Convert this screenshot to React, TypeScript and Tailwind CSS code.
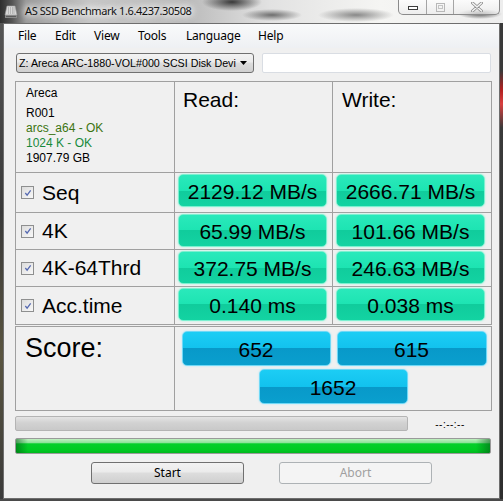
import React from "react"

const rows = [
  { label: "Seq", read: "2129.12 MB/s", write: "2666.71 MB/s" },
  { label: "4K", read: "65.99 MB/s", write: "101.66 MB/s" },
  { label: "4K-64Thrd", read: "372.75 MB/s", write: "246.63 MB/s" },
  { label: "Acc.time", read: "0.140 ms", write: "0.038 ms" },
]

const menu = [
  { label: "File", w: "w-[37px]" },
  { label: "Edit", w: "w-[39px]" },
  { label: "View", w: "w-[44px]" },
  { label: "Tools", w: "w-[48px]" },
  { label: "Language", w: "w-[72px]" },
  { label: "Help", w: "w-[40px]" },
]

function CheckBox() {
  return (
    <span className="flex size-[13px] items-center justify-center border border-[#8e8f8f] bg-[linear-gradient(135deg,#dcdcdc,#f8f8f8)]">
      <svg viewBox="0 0 9 9" className="size-[8px]">
        <path d="M1.5 4.5 L3.5 7 L7.5 1.5" fill="none" stroke="#5468b0" strokeWidth="1.4" />
      </svg>
    </span>
  )
}

function GreenBox({ value }: { value: string }) {
  return (
    <div className="flex h-[33px] w-[149px] items-center justify-center rounded-[5px] border border-[#7cf0d0] bg-[linear-gradient(180deg,#2ae9bb_0%,#1de4b2_50%,#10cc9c_50%,#13d3a2_100%)] pt-[2px] shadow-[0_0_2px_#9ef5dc] font-['Liberation_Sans',Arial,sans-serif] text-[21px] text-black">
      {value}
    </div>
  )
}

function BlueBox({ value, w }: { value: string; w: string }) {
  return (
    <div className={`flex h-[35px] ${w} items-center justify-center rounded-[5px] border border-[#6fd8f6] bg-[linear-gradient(180deg,#1ccdf4_0%,#12c2ee_50%,#0899c9_50%,#0a9fce_100%)] pt-[2px] shadow-[0_0_2px_#a5e6fa] font-['Liberation_Sans',Arial,sans-serif] text-[21px] text-black`}>
      {value}
    </div>
  )
}

export default function App() {
  return (
    <div className="flex h-[501px] w-[503px] flex-col overflow-hidden bg-[#3a3a3a] font-['Noto_Sans',sans-serif]">
      {/* Title bar */}
      <div className="flex h-[23px] shrink-0 items-start justify-between bg-[radial-gradient(ellipse_30px_6px_at_272px_15px,rgba(70,70,70,0.75),transparent),radial-gradient(ellipse_38px_7px_at_356px_15px,rgba(80,80,80,0.65),transparent),radial-gradient(ellipse_22px_5px_at_480px_14px,rgba(60,60,60,0.8),transparent),radial-gradient(ellipse_30px_9px_at_232px_2px,rgba(40,40,40,0.9),transparent),linear-gradient(90deg,#2e2e2e,#555_12px,#9a9a9a_26px,#c6c6c6_90px,#bcbcbc_190px,#e2e2e2_270px,#f5f5f3_380px,#ededed)]">
        <div className="flex h-[23px] items-center gap-[7px] pl-[4px]">
          <svg viewBox="0 0 14 14" className="size-[14px]">
            <path d="M3 1 H11 L13 10 H1 Z" fill="#d8d8d8" stroke="#9a9a9a" strokeWidth="0.6" />
            <path d="M4.5 2 V9 M6.5 2 V9 M8.5 2 V9 M10 2 V9" stroke="#a8a8a8" strokeWidth="0.7" />
            <rect x="1" y="10" width="12" height="3" fill="#8a8a8a" />
            <rect x="2" y="11" width="10" height="1" fill="#5c5c5c" />
          </svg>
          <span className="text-[11px] tracking-[-0.4px] text-[#111] [text-shadow:0_0_6px_#fff,0_0_8px_#fff,0_0_10px_#fff]">
            AS SSD Benchmark 1.6.4237.30508
          </span>
        </div>
        <div className="mr-[3px] flex h-[15px] w-[102px] overflow-hidden rounded-b-[5px] border border-t-0 border-[#8a8a8a] bg-[linear-gradient(180deg,rgba(255,255,255,0.75),rgba(235,235,235,0.7))]">
          <div className="flex w-[28px] items-center justify-center border-r border-[#a5a5a5]">
            <span className="mt-[2px] h-[4px] w-[10px] border border-[#3c3c3c] bg-white" />
          </div>
          <div className="flex w-[27px] items-center justify-center border-r border-[#a5a5a5]">
            <span className="flex size-[9px] items-center justify-center border border-[#b8b8b8]">
              <span className="h-[4px] w-[5px] border border-[#c4c4c4]" />
            </span>
          </div>
          <div className="flex flex-1 items-center justify-center">
            <svg viewBox="0 0 12 10" className="h-[10px] w-[12px]">
              <path d="M1.5 1 L10.5 9 M10.5 1 L1.5 9" stroke="#8a8a8a" strokeWidth="3" strokeLinecap="round" />
              <path d="M1.5 1 L10.5 9 M10.5 1 L1.5 9" stroke="#f4f4f4" strokeWidth="1.6" strokeLinecap="round" />
            </svg>
          </div>
        </div>
      </div>

      {/* Frame + client area */}
      <div className="flex h-[476px] shrink-0">
        <div className="w-[3px] bg-[linear-gradient(180deg,#555,#3a3a3a_40%,#5a5540_70%,#3a3a3a)]" />
        <div className="flex w-[497px] flex-col border border-[#6e6e6e] bg-[#f0f0f0]">
          {/* Menu */}
          <div className="flex h-[24px] items-center bg-[linear-gradient(180deg,#f9fafb,#eef0f3)] pl-[14px] text-[12px] tracking-[-0.2px] text-black">
            {menu.map((m) => (
              <span key={m.label} className={m.w}>
                {m.label}
              </span>
            ))}
          </div>

          {/* Drive selector */}
          <div className="mt-[5px] flex h-[20px] gap-[8px] pl-[12px]">
            <div className="flex w-[238px] items-center justify-between rounded-[3px] border border-[#707070] bg-[linear-gradient(180deg,#f3f3f3,#ebebeb_45%,#dddddd_50%,#cfcfcf)] pl-[2px] pr-[6px]">
              <span className="whitespace-nowrap font-['Liberation_Sans',Arial,sans-serif] text-[10.7px] text-black">
                Z: Areca ARC-1880-VOL#000 SCSI Disk Devi
              </span>
              <svg viewBox="0 0 7 4" className="h-[4px] w-[7px]">
                <path d="M0 0 H7 L3.5 4 Z" fill="#000" />
              </svg>
            </div>
            <div className="w-[229px] rounded-[2px] border border-[#d9dde3] bg-white" />
          </div>

          {/* Results table */}
          <div className="ml-[11px] mt-[8px] grid w-[477px] grid-cols-[158px_157px_158px] grid-rows-[90px_39px_36px_36px_37px] gap-px bg-[#a0a0a0] p-px">
            <div className="flex flex-col bg-[#f0f0f0] pl-[10px] pt-[4px] font-['Liberation_Sans',Arial,sans-serif] text-[12px] leading-[15px] text-black">
              <span>Areca</span>
              <span className="mt-[5px]">R001</span>
              <span className="text-[#3c7410]">arcs_a64 - OK</span>
              <span className="text-[#178a3c]">1024 K - OK</span>
              <span>1907.79 GB</span>
            </div>
            <div className="bg-[#f0f0f0] pl-[8px] pt-[2px] font-['Liberation_Sans',Arial,sans-serif] text-[21px] text-black">
              Read:
            </div>
            <div className="bg-[#f0f0f0] pl-[9px] pt-[2px] font-['Liberation_Sans',Arial,sans-serif] text-[21px] text-black">
              Write:
            </div>
            {rows.map((r) => (
              <React.Fragment key={r.label}>
                <div className="flex items-center gap-[8px] bg-[#f0f0f0] pl-[5px] font-['Liberation_Sans',Arial,sans-serif] text-[21px] text-black">
                  <CheckBox />
                  <span>{r.label}</span>
                </div>
                <div className="bg-[#f0f0f0] pl-[3px] pt-px">
                  <GreenBox value={r.read} />
                </div>
                <div className="bg-[#f0f0f0] pl-[3px] pt-px">
                  <GreenBox value={r.write} />
                </div>
              </React.Fragment>
            ))}
          </div>

          {/* Score */}
          <div className="ml-[11px] mt-px grid h-[85px] w-[477px] grid-cols-[158px_316px] gap-px bg-[#a0a0a0] p-px">
            <div className="bg-[#f0f0f0] pl-[9px] pt-px font-['Liberation_Sans',Arial,sans-serif] text-[27px] text-black">
              Score:
            </div>
            <div className="flex flex-col items-center gap-[3px] bg-[#f0f0f0] pt-[4px]">
              <div className="flex gap-[6px] pl-[2px]">
                <BlueBox value="652" w="w-[149px]" />
                <BlueBox value="615" w="w-[150px]" />
              </div>
              <BlueBox value="1652" w="w-[149px]" />
            </div>
          </div>

          {/* Progress */}
          <div className="ml-[11px] mt-[5px] flex h-[15px] w-[477px] items-center">
            <div className="h-[15px] w-[393px] rounded-[2px] border border-[#b4b4b4] bg-[linear-gradient(180deg,#e4e4e4,#d2d2d2_45%,#c9c9c9)]" />
            <span className="flex-1 pt-px text-center font-['Liberation_Sans',Arial,sans-serif] text-[10px] tracking-[0.5px] text-black">
              --:--:--
            </span>
          </div>
          <div className="ml-[11px] mt-[7px] h-[16px] w-[476px] rounded-[2px] border border-[#9a9a9a] bg-[linear-gradient(90deg,rgba(0,90,20,0.55),transparent_12px,transparent_calc(100%-14px),rgba(0,90,20,0.55)),linear-gradient(180deg,#c2f0c2_0%,#8fe39a_25%,#05cf2a_35%,#00cc22_75%,#00b81e_100%)]" />

          {/* Buttons */}
          <div className="mt-[8px] flex h-[22px] gap-[35px] pl-[87px] text-[12px]">
            <div className="flex w-[153px] items-center justify-center rounded-[3px] border border-[#707070] bg-[linear-gradient(180deg,#f2f2f2,#ebebeb_45%,#dddddd_50%,#cfcfcf)] text-black">
              Start
            </div>
            <div className="flex w-[153px] items-center justify-center rounded-[3px] border border-[#adb2b5] bg-[#f4f4f4] text-[#a0a0a0]">
              Abort
            </div>
          </div>
        </div>
        <div className="w-[3px] bg-[linear-gradient(180deg,#3a3a3a,#3a3a3a_10%,#b02020_14%,#d84040_17%,#3a3a3a_22%,#2e2e2e)]" />
      </div>
      <div className="h-[2px] bg-[#4a4a4a]" />
    </div>
  )
}
